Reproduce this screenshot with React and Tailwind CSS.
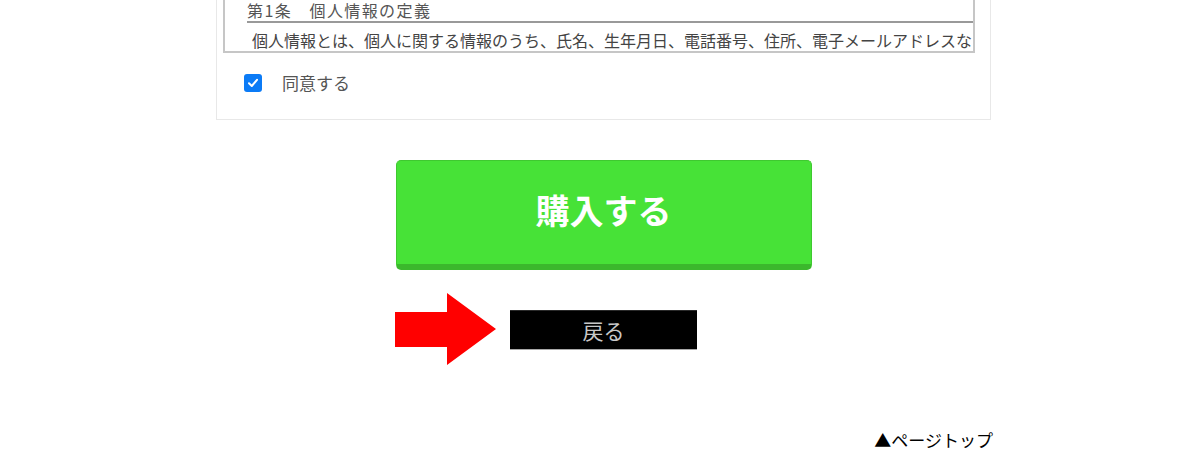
export default function App() {
  return (
    <div className="w-[1200px] h-[450px] overflow-hidden bg-white font-['Noto_Sans_CJK_JP','Noto_Sans',sans-serif]">
      <div className="pl-[216px]">
        {/* Agreement card (page is scrolled, top is above the viewport) */}
        <div className="-mt-[20px] w-[775px] border border-[#e8e8e8] pl-[6px] pr-[14px] pb-[27px]">
          <div className="h-[72px] w-[752px] overflow-hidden border-2 border-[#c6c6c6] pt-[17px]">
            <div className="ml-[22px] border-b-2 border-[#999] pb-[1px] text-[16px] leading-[20px] tracking-[1.4px] text-[#555]">
              第1条　個人情報の定義
            </div>
            <p className="mt-[5px] pl-[27px] text-[16px] leading-[24px] text-[#444]">
              個人情報とは、個人に関する情報のうち、氏名、生年月日、電話番号、住所、電子メールアドレスなど、特定の個人を識別できる情報をいいます。
            </p>
          </div>
          <div className="mt-[21px] ml-[21px] flex h-[18px] items-center">
            <div className="flex h-[18px] w-[18px] shrink-0 items-center justify-center rounded-[3px] bg-[#0b7bf6]">
              <svg width="12" height="12" viewBox="0 0 12 12" fill="none">
                <path d="M2 6.3 L4.8 9 L10 2.8" stroke="white" strokeWidth="2" strokeLinecap="round" strokeLinejoin="round" />
              </svg>
            </div>
            <span className="ml-[20px] text-[17px] leading-[18px] text-[#555]">同意する</span>
          </div>
        </div>

        {/* Buttons */}
        <div className="w-[775px] flex flex-col items-center">
          <button className="mt-[40px] flex h-[110px] w-[416px] items-center justify-center rounded-[5px] border border-[#3fc930] border-b-[6px] border-b-[#3bb82c] bg-[#47e237] pb-[5px] text-[34px] font-bold leading-none text-white">
            購入する
          </button>
          <div className="relative mt-[40px]">
            <svg className="absolute right-[200px] -top-[17px]" width="102" height="72" viewBox="0 0 102 72">
              <polygon points="0,19 52,19 52,0 101,36 52,72 52,54 0,54" fill="#ff0000" />
            </svg>
            <button className="flex h-[40px] w-[187px] items-center justify-center border-t border-t-[#2a2a2a] border-b border-b-[#a8a8a8] bg-black text-[21px] leading-none text-[#c8c8c8]">
              戻る
            </button>
          </div>
        </div>

        <div className="mt-[80px] w-[777px] text-right text-[17px] leading-[20px] text-black">
          ▲ページトップ
        </div>
      </div>
    </div>
  );
}
